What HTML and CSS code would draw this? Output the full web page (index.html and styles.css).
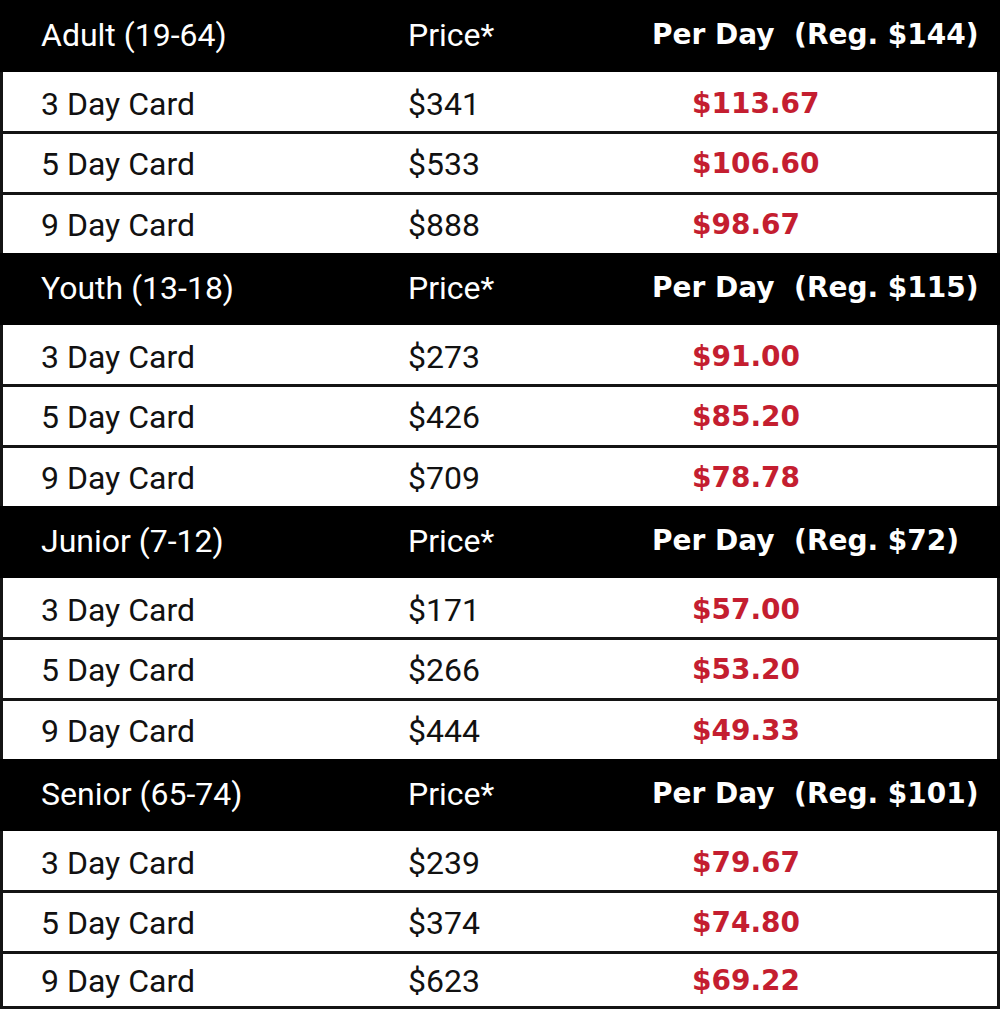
FILE: index.html
```html
<!DOCTYPE html>
<html>
<head>
<meta charset="utf-8">
<link rel="stylesheet" href="styles.css">
</head>
<body>
<div class="table">
  <div class="group">
    <div class="head"><span class="c1">Adult (19-64)</span><span class="c2">Price*</span><span class="c3">Per Day&nbsp; (Reg. $144)</span></div>
    <div class="row"><span class="c1">3 Day Card</span><span class="c2">$341</span><span class="c3 val">$113.67</span></div>
    <div class="row"><span class="c1">5 Day Card</span><span class="c2">$533</span><span class="c3 val">$106.60</span></div>
    <div class="row"><span class="c1">9 Day Card</span><span class="c2">$888</span><span class="c3 val">$98.67</span></div>
  </div>
  <div class="group">
    <div class="head"><span class="c1">Youth (13-18)</span><span class="c2">Price*</span><span class="c3">Per Day&nbsp; (Reg. $115)</span></div>
    <div class="row"><span class="c1">3 Day Card</span><span class="c2">$273</span><span class="c3 val">$91.00</span></div>
    <div class="row"><span class="c1">5 Day Card</span><span class="c2">$426</span><span class="c3 val">$85.20</span></div>
    <div class="row"><span class="c1">9 Day Card</span><span class="c2">$709</span><span class="c3 val">$78.78</span></div>
  </div>
  <div class="group">
    <div class="head"><span class="c1">Junior (7-12)</span><span class="c2">Price*</span><span class="c3">Per Day&nbsp; (Reg. $72)</span></div>
    <div class="row"><span class="c1">3 Day Card</span><span class="c2">$171</span><span class="c3 val">$57.00</span></div>
    <div class="row"><span class="c1">5 Day Card</span><span class="c2">$266</span><span class="c3 val">$53.20</span></div>
    <div class="row"><span class="c1">9 Day Card</span><span class="c2">$444</span><span class="c3 val">$49.33</span></div>
  </div>
  <div class="group">
    <div class="head"><span class="c1">Senior (65-74)</span><span class="c2">Price*</span><span class="c3">Per Day&nbsp; (Reg. $101)</span></div>
    <div class="row"><span class="c1">3 Day Card</span><span class="c2">$239</span><span class="c3 val">$79.67</span></div>
    <div class="row"><span class="c1">5 Day Card</span><span class="c2">$374</span><span class="c3 val">$74.80</span></div>
    <div class="row"><span class="c1">9 Day Card</span><span class="c2">$623</span><span class="c3 val">$69.22</span></div>
  </div>
</div>
</body>
</html>
```

FILE: styles.css
```css
html, body {
  margin: 0;
  padding: 0;
  background: #141414;
}

body {
  width: 1000px;
  height: 1009px;
  overflow: hidden;
  font-family: Roboto, "Liberation Sans", sans-serif;
}

.table {
  width: 1000px;
  background: #141414;
  display: flex;
  flex-direction: column;
}

.group {
  display: flex;
  flex-direction: column;
  gap: 3px;
}

.head,
.row {
  display: grid;
  align-items: center;
  font-size: 32px;
  line-height: 1;
}

.head {
  height: 72px;
  background: #000000;
  color: #ffffff;
  grid-template-columns: 408px 244px 1fr;
  margin-bottom: -3px;
  padding-bottom: 2px;
  box-sizing: border-box;
}

.row {
  height: 58px;
  background: #ffffff;
  color: #111111;
  margin: 0 3px;
  grid-template-columns: 405px 244px 1fr;
  padding-top: 2px;
  box-sizing: border-box;
}

.head + .row {
  height: 59px;
  padding-top: 4px;
}

.group:last-child .row:last-child {
  height: 52px;
}

.head .c1 {
  padding-left: 41px;
}

.row .c1 {
  padding-left: 38px;
}

.head .c3 {
  font-family: "DejaVu Sans", sans-serif;
  font-weight: bold;
  font-size: 28px;
  white-space: nowrap;
}

.row .val {
  padding-left: 40px;
  font-family: "DejaVu Sans", sans-serif;
  font-weight: bold;
  font-size: 28px;
  color: #c41e30;
}
```
